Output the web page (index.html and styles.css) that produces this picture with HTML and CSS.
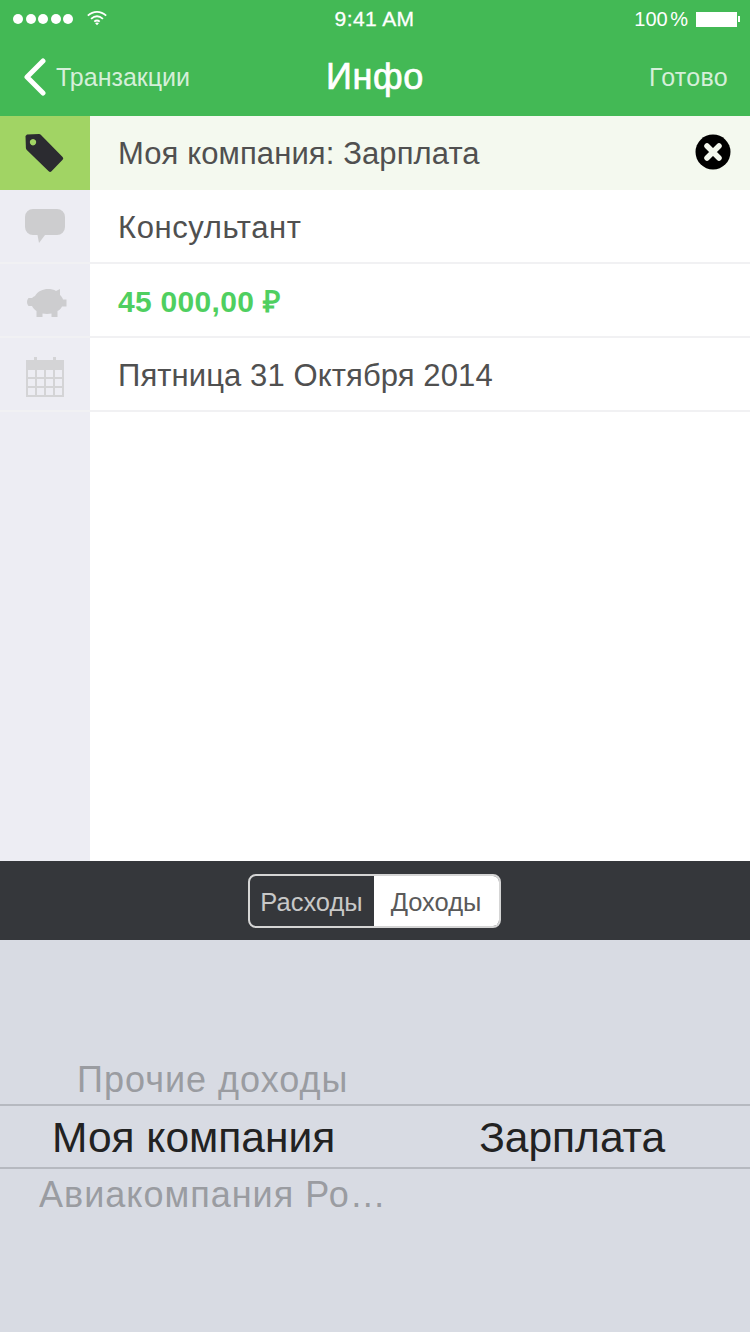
FILE: index.html
```html
<!DOCTYPE html>
<html lang="ru">
<head>
    <meta charset="UTF-8">
    <meta name="viewport" content="width=device-width, initial-scale=1.0">
    <title>Инфо</title>
    <link rel="stylesheet" href="styles.css">
</head>
<body>
    <header class="top">
        <div class="status">
            <div class="status-left">
                <span class="dots"><i></i><i></i><i></i><i></i><i></i></span>
                <svg class="wifi" width="24" height="17" viewBox="0 0 24 17" fill="none" stroke="#fff" stroke-width="2">
                    <path d="M2 6.500C8 1 16 1 22 6.500"/>
                    <path d="M5.500 10C9.500 6.500 14.500 6.500 18.500 10"/>
                    <path d="M9 13C10.800 11.500 13.200 11.500 15 13"/>
                    <path d="M12 17l-2.200-2.500c1.300-.8 3.100-.8 4.400 0z" fill="#fff" stroke="none"/>
                </svg>
            </div>
            <span class="time">9:41 AM</span>
            <div class="status-right">
                <span>100 %</span>
                <span class="battery"></span>
                <span class="battery-tip"></span>
            </div>
        </div>
        <nav class="nav">
            <a class="back">
                <svg width="25" height="38" viewBox="0 0 25 38" fill="none" stroke="#fff" stroke-width="5" stroke-linecap="round" stroke-linejoin="round">
                    <path d="M21 3L5 19l16 16"/>
                </svg>
                <span>Транзакции</span>
            </a>
            <h1>Инфо</h1>
            <a class="done">Готово</a>
        </nav>
    </header>

    <main class="info">
        <div class="row row-active">
            <div class="cell-icon icon-tag">
                <svg width="40" height="40" viewBox="0 0 40 40">
                    <path fill-rule="evenodd" fill="#2b2b30" d="M3 1.500L15 1a3 3 0 0 1 2 .9L38.600 24a2 2 0 0 1 0 2.800L27.500 38.300a2 2 0 0 1-2.800 0L2.800 17a3 3 0 0 1-.9-2L1.500 3zM9 6a3.200 3.200 0 1 0 .01 0z"/>
                </svg>
            </div>
            <div class="cell-text">Моя компания: Зарплата</div>
            <span class="clear">
                <svg width="36" height="36" viewBox="0 0 36 36">
                    <circle cx="18" cy="18" r="17.500" fill="#000"/>
                    <path d="M12 12l12 12M24 12L12 24" stroke="#f4f8ef" stroke-width="5.500" stroke-linecap="round"/>
                </svg>
            </span>
        </div>
        <div class="row row-low">
            <div class="cell-icon">
                <svg width="40" height="36" viewBox="0 0 40 36">
                    <path fill="#cdcdcf" d="M8 1h24a8 8 0 0 1 8 8v10a8 8 0 0 1-8 8H20l-6 8-1.500-8H8a8 8 0 0 1-8-8V9a8 8 0 0 1 8-8z"/>
                </svg>
            </div>
            <div class="cell-text cell-wide">Консультант</div>
        </div>
        <div class="row">
            <div class="cell-icon icon-pig">
                <svg width="40" height="31" viewBox="0 0 40 31">
                    <path fill="#cdcdcf" d="M8 9C11 4 16 2 21 2c3 0 6 .5 8 2l4-2v6c1.500 1.300 2.500 3 3 4.500h3.500v7H35c-1 2-2.500 3.500-4.500 4.500v6h-6v-3.500c-3 .5-6 .5-9 0V30h-6v-6c-2-1.200-3.500-2.800-4.500-5H1.500c-1-1-1.500-3-1.500-4s.5-3 1.500-4H5c1-1 2-1.500 3-2z"/>
                </svg>
            </div>
            <div class="cell-text cell-amount">45 000,00 ₽</div>
        </div>
        <div class="row row-low">
            <div class="cell-icon icon-cal">
                <svg width="38" height="40" viewBox="0 0 38 40" fill="none" stroke="#d4d4d6" stroke-width="2">
                    <path d="M1 4h36v35H1z" />
                    <path fill="#d4d4d6" stroke="none" d="M0 3h38v10H0z"/>
                    <path fill="#d4d4d6" stroke="none" d="M8 0h3v4H8zM27 0h3v4h-3z"/>
                    <path d="M10 13v26M19 13v26M28 13v26M1 21h36M1 30h36"/>
                </svg>
            </div>
            <div class="cell-text">Пятница 31 Октября 2014</div>
        </div>
        <div class="row-fill"><div class="cell-icon"></div></div>
    </main>

    <div class="toolbar">
        <div class="segments">
            <span class="segment segment-on">Расходы</span>
            <span class="segment segment-off">Доходы</span>
        </div>
    </div>

    <section class="picker">
        <div class="picker-above">
            <span class="other">Прочие доходы</span>
        </div>
        <div class="picker-selected">
            <span class="company">Моя компания</span>
            <span class="sub">Зарплата</span>
        </div>
        <div class="picker-below">
            <span class="other">Авиакомпания Ро…</span>
        </div>
    </section>
</body>
</html>
```

FILE: styles.css
```css
/* Basic reset */
* {
    margin: 0;
    padding: 0;
    box-sizing: border-box;
}

body {
    width: 750px;
    height: 1332px;
    display: flex;
    flex-direction: column;
    font-family: "Liberation Sans", Arial, sans-serif;
    background: #fff;
    overflow: hidden;
}

/* Green header */
.top {
    height: 116px;
    background: #43b955;
    color: #fff;
}

.status {
    height: 38px;
    padding: 0 10px 0 13px;
    display: flex;
    align-items: center;
    font-size: 20px;
}

.status-left {
    display: flex;
    align-items: center;
    gap: 13px;
    flex: 1;
}

.dots {
    display: flex;
    gap: 2.500px;
}

.dots i {
    width: 10px;
    height: 10px;
    border-radius: 50%;
    background: #fff;
}

.wifi {
    margin-top: -4px;
    width: 22px;
}

.time {
    font-size: 21px;
    letter-spacing: 0.4px;
    -webkit-text-stroke: 0.3px #fff;
    margin-right: 4px;
}

.status-right {
    flex: 1;
    display: flex;
    align-items: center;
    justify-content: flex-end;
}

.status-right span:first-child {
    margin-right: 8px;
    word-spacing: -3px;
}

.battery {
    width: 41px;
    height: 15px;
    background: #fff;
}

.battery-tip {
    width: 2px;
    height: 6px;
    margin-left: 1px;
    background: #fff;
}

.nav {
    height: 78px;
    padding: 0 22px;
    display: flex;
    align-items: center;
    justify-content: space-between;
    position: relative;
}

.nav h1 {
    font-size: 36px;
    font-weight: 400;
    -webkit-text-stroke: 0.7px #fff;
    letter-spacing: 0.6px;
    position: absolute;
    left: 0;
    right: 0;
    top: 18px;
    text-align: center;
}

.back {
    display: flex;
    align-items: center;
    gap: 9px;
    font-size: 25px;
    color: #d5efd9;
}

.done {
    font-size: 25px;
    letter-spacing: 0.3px;
    color: #d5efd9;
}

/* Info rows */
.info {
    height: 745px;
    display: flex;
    flex-direction: column;
}

.row {
    height: 74px;
    display: flex;
    align-items: center;
    border-bottom: 2px solid #f1f1f3;
    position: relative;
}

.row-active {
    background: #f4f9ef;
    border-bottom: 0;
}

.row-active .cell-icon {
    background: #a1d464;
}

.row-low .cell-text {
    padding-top: 3px;
}

.cell-icon {
    width: 90px;
    height: 100%;
    flex: none;
    display: flex;
    align-items: center;
    justify-content: center;
    background: #ededf3;
}

.icon-tag {
    padding-right: 2px;
}

.icon-pig {
    padding: 4px 0 0 4px;
}

.icon-cal {
    padding-top: 6px;
}

.cell-text {
    padding: 1px 0 0 28px;
    font-size: 31px;
    letter-spacing: 0.1px;
    color: #505050;
}

.cell-wide {
    letter-spacing: 0.6px;
}

.cell-amount {
    color: #4fcf60;
    font-size: 30px;
    font-weight: 700;
    letter-spacing: 0.3px;
}

.clear {
    position: absolute;
    right: 19px;
    top: 18px;
    height: 36px;
}

.row-fill {
    flex: 1;
    display: flex;
}

/* Toolbar with segments */
.toolbar {
    height: 79px;
    flex: none;
    background: #35373b;
    display: flex;
    align-items: center;
    justify-content: center;
    padding-right: 2px;
}

.segments {
    width: 253px;
    height: 54px;
    display: flex;
    border: 2px solid #d5d5d5;
    border-radius: 8px;
    overflow: hidden;
    font-size: 25.500px;
}

.segment {
    display: flex;
    align-items: center;
    justify-content: center;
    padding-top: 4px;
}

.segment-on {
    width: 124px;
    color: #c8c8c8;
}

.segment-off {
    flex: 1;
    background: #fff;
    color: #5a5a5a;
}

/* Picker wheel */
.picker {
    flex: 1;
    background: #d8dbe3;
    display: flex;
    flex-direction: column;
}

.picker-above {
    height: 166px;
    display: flex;
    align-items: flex-end;
    padding: 0 0 3px 77px;
    border-bottom: 2px solid #b6b9c0;
}

.picker-selected {
    height: 63px;
    display: flex;
    align-items: center;
    padding-top: 3px;
    font-size: 42.500px;
    color: #222;
    border-bottom: 2px solid #b6b9c0;
}

.company {
    margin-left: 52px;
}

.sub {
    margin-left: 144px;
}

.picker-below {
    padding: 5px 0 0 39px;
}

.other {
    font-size: 36px;
    color: #9a9ca1;
    letter-spacing: 1px;
}
```
